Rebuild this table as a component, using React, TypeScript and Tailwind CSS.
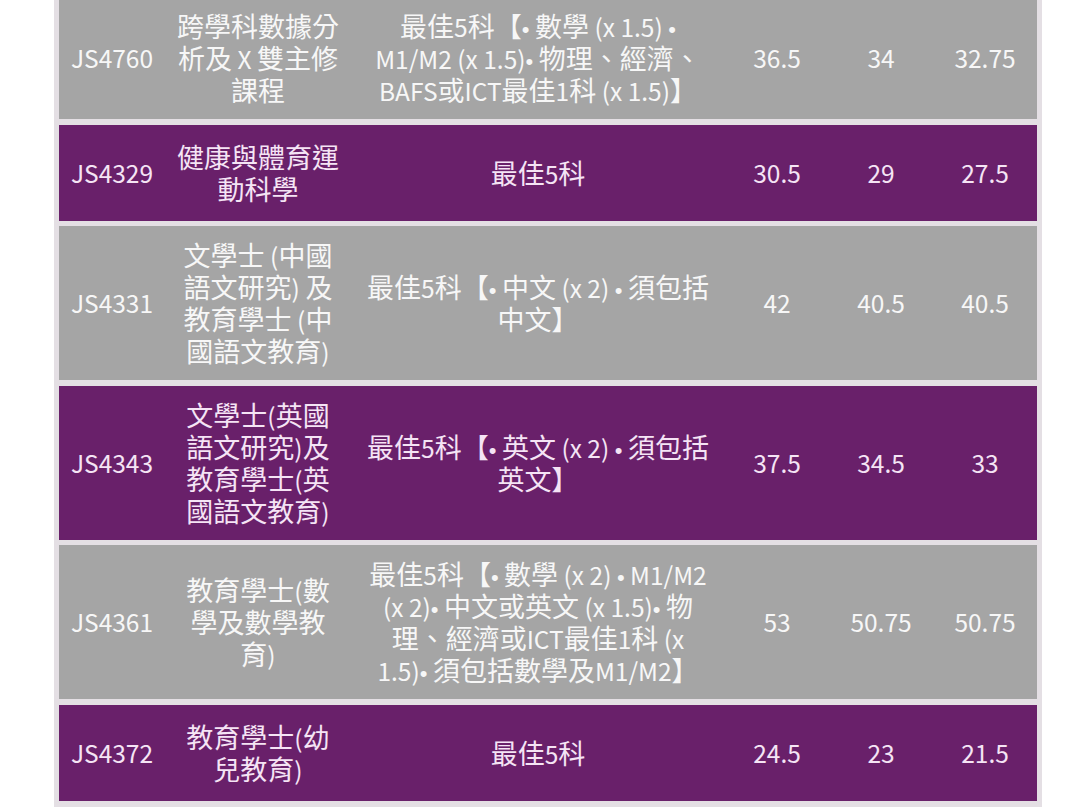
import React from "react";

type Row = {
  code: string;
  name: string[];
  req: string[];
  a: string;
  b: string;
  c: string;
};

const rows: Row[] = [
  {
    code: "JS4760",
    name: ["跨學科數據分", "析及 X 雙主修", "課程"],
    req: ["最佳5科【• 數學 (x 1.5) •", "M1/M2 (x 1.5)• 物理、經濟、", "BAFS或ICT最佳1科 (x 1.5)】"],
    a: "36.5",
    b: "34",
    c: "32.75",
  },
  { code: "JS4329", name: ["健康與體育運", "動科學"], req: ["最佳5科"], a: "30.5", b: "29", c: "27.5" },
  {
    code: "JS4331",
    name: ["文學士 (中國", "語文研究) 及", "教育學士 (中", "國語文教育)"],
    req: ["最佳5科【• 中文 (x 2) • 須包括", "中文】"],
    a: "42",
    b: "40.5",
    c: "40.5",
  },
  {
    code: "JS4343",
    name: ["文學士(英國", "語文研究)及", "教育學士(英", "國語文教育)"],
    req: ["最佳5科【• 英文 (x 2) • 須包括", "英文】"],
    a: "37.5",
    b: "34.5",
    c: "33",
  },
  {
    code: "JS4361",
    name: ["教育學士(數", "學及數學教", "育)"],
    req: ["最佳5科【• 數學 (x 2) • M1/M2", "(x 2)• 中文或英文 (x 1.5)• 物", "理、經濟或ICT最佳1科 (x", "1.5)• 須包括數學及M1/M2】"],
    a: "53",
    b: "50.75",
    c: "50.75",
  },
  { code: "JS4372", name: ["教育學士(幼", "兒教育)"], req: ["最佳5科"], a: "24.5", b: "23", c: "21.5" },
];

const CJK = /[\u3000-\u303f\u3400-\u9fff\uff00-\uffef]/;

// latin runs are set a little smaller than the CJK, bullets narrow
const Mixed = ({ text }: { text: string }) => {
  const parts = text.match(/[\u3000-\u303f\u3400-\u9fff\uff00-\uffef]+|•|[^\u3000-\u303f\u3400-\u9fff\uff00-\uffef•]+/g) || [];
  return (
    <>
      {parts.map((p, i) => {
        if (p === "•")
          return (
            <span key={i} className="text-[22px] font-['Liberation_Sans']">
              •
            </span>
          );
        if (CJK.test(p)) return <span key={i}>{p}</span>;
        return (
          <span key={i} className="text-[24.5px]">
            {p}
          </span>
        );
      })}
    </>
  );
};

// stacked lines, centred
const Lines = ({ lines }: { lines: string[] }) => (
  <div className="flex flex-col items-center">
    {lines.map((l, i) => (
      <span key={i} className="whitespace-nowrap h-[32px]">
        <Mixed text={l} />
      </span>
    ))}
  </div>
);

export default function App() {
  return (
    <div className="w-[1080px] h-[807px] overflow-hidden bg-white">
      <div
        className="ml-[54px] w-[988px] -mt-[3px] bg-[#e4dfe4] px-[5px] pb-[6px] flex flex-col gap-[5.5px] text-[27px] leading-[32px]"
        style={{ fontFamily: '"Noto Sans CJK TC", "Noto Sans", sans-serif' }}
      >
        {rows.map((r, i) => {
          const purple = i % 2 === 1;
          return (
            <div
              key={r.code}
              className={
                purple
                  ? "flex items-center min-h-[96px] py-[13px] bg-[#69206a] text-[#f5e4f5]"
                  : "flex items-center min-h-[96px] py-[13px] bg-[#a5a5a5] text-[#f7f7f7]"
              }
            >
              <div className="w-[106px] text-center text-[24.5px]">{r.code}</div>
              <div className="w-[186px] flex justify-center">
                <Lines lines={r.name} />
              </div>
              <div className="w-[374px] flex justify-center">
                <Lines lines={r.req} />
              </div>
              <div className="w-[104px] text-center text-[24.5px]">{r.a}</div>
              <div className="w-[104px] text-center text-[24.5px]">{r.b}</div>
              <div className="w-[104px] text-center text-[24.5px]">{r.c}</div>
            </div>
          );
        })}
      </div>
    </div>
  );
}
